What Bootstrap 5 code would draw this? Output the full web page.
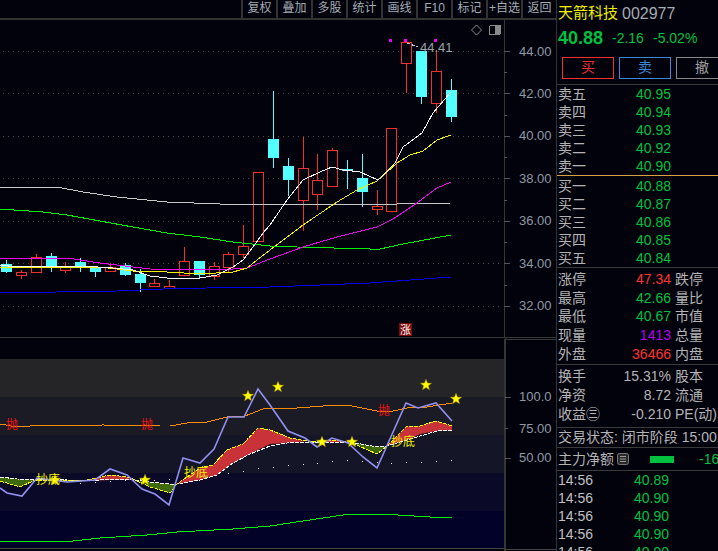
<!DOCTYPE html>
<html lang="zh">
<head>
<meta charset="utf-8">
<title>天箭科技 002977</title>
<link href="https://cdn.jsdelivr.net/npm/bootstrap@5.3.0/dist/css/bootstrap.min.css" rel="stylesheet">
<style>
html,body{height:100%;margin:0;overflow:hidden;background:#02020c;}
body{font-family:"Liberation Sans","Noto Sans CJK SC",sans-serif;font-size:14px;color:#b4b4b4;}
.app{width:718px;height:551px;overflow:hidden;}
.chartcol{width:556px;flex:none;}
.toolbar{height:20px;border-bottom:2px solid #333;}
.toolbtn{width:35px;height:18px;border-left:2px solid #333;color:#a3abb3;font-size:12px;line-height:17px;text-align:center;white-space:nowrap;}
.chartsvg{display:block;width:556px;height:531px;}
.chartsvg text{font-family:"Liberation Sans","Noto Sans CJK SC",sans-serif;}
.axis{fill:#8f99a3;font-size:13px;}
.side{width:162px;flex:none;border-left:1px solid #333;overflow:hidden;}
.head{height:84px;padding-left:1px;}
.titlerow{height:27px;}
.stockname{color:#f0f000;font-size:15px;}
.stockcode{color:#a3abb3;font-size:16px;margin-left:4px;}
.pricerow{height:22px;}
.bigprice{color:#00c040;font-size:18px;font-weight:700;width:54px;}
.chg{color:#00c040;font-size:14px;width:41px;}
.tradebtns{margin-top:8px;padding-left:4px;gap:5px;width:190px;}
.tradebtn{width:52px;height:22px;flex:none;border:1.5px solid;font-size:14px;line-height:19px;text-align:center;}
.tb-buy{border-color:#f03030;color:#f03030;}
.tb-sell{border-color:#3a8ad8;color:#3a8ad8;}
.tb-undo{border-color:#888;color:#a0a0a0;}
.sect{border-top:1px solid #3a3a3a;padding-left:1px;white-space:nowrap;}
.goldline{border-top:1px solid #d8a040;}
.rowq{height:18px;line-height:18px;}
.rowq .lb{width:78px;flex:none;}
.up{color:#00c040;}
.sect-sell{height:91px;}
.sect-buy{height:92px;padding-top:1px;}
.sect-stat{height:97px;padding-top:2px;}
.rowst{height:18.7px;line-height:18.7px;}
.sect-turn{height:63px;padding-top:2px;}
.rowtn{height:19px;line-height:19px;}
.rowst .lb1,.rowtn .lb1{width:28px;flex:none;}
.valbox{width:85px;flex:none;text-align:right;margin-right:4px;}
.rowtn .lb1x{width:28px;flex:none;}
.red{color:#ff3232;}
.purple{color:#b400f0;}
.stateline{height:20px;line-height:19px;overflow:hidden;}
.flowline{height:23px;line-height:22px;overflow:hidden;}
.flowicon{display:block;width:12px;height:12px;flex:none;margin:0 21px 0 3px;}
.flowbar{width:24px;height:7px;background:#00c040;flex:none;margin-right:25px;}
.ticktime{width:76px;flex:none;color:#c0c0c0;}
</style>
</head>
<body>
<div class="app d-flex">
  <div class="chartcol">
    <div class="toolbar d-flex justify-content-end">
      <div class="toolbtn">复权</div><div class="toolbtn">叠加</div><div class="toolbtn">多股</div><div class="toolbtn">统计</div><div class="toolbtn">画线</div><div class="toolbtn">F10</div><div class="toolbtn">标记</div><div class="toolbtn">+自选</div><div class="toolbtn">返回</div>
    </div>
    <svg class="chartsvg" viewBox="0 20 556 531" xmlns="http://www.w3.org/2000/svg" shape-rendering="crispEdges">
      <defs>
        <polygon id="star" points="0,-5.8 1.5,-2 5.6,-1.8 2.4,0.8 3.5,4.7 0,2.5 -3.5,4.7 -2.4,0.8 -5.6,-1.8 -1.5,-2" fill="#ffff00" stroke="#a08000" stroke-width=".5" shape-rendering="auto"/>
      </defs>
      <!-- grid -->
      <g stroke="#4a4a4a" stroke-dasharray="1 4">
        <path d="M3 51.5H503M3 93.5H503M3 136.5H503M3 178.5H503M3 221.5H503M3 263.5H503M3 306.5H503"/>
      </g>
      <!-- axis -->
      <path d="M504.5 20V338M0 337.5H556M505.5 338V551M504 339.5H556" stroke="#363636" fill="none"/>
      <path d="M504 338.5V551" stroke="#363636"/>
      <path d="M504 51.5h6M504 93.5h6M504 136.5h6M504 178.5h6M504 221.5h6M504 263.5h6M504 306.5h6M504 72.5h3M504 115.5h3M504 157.5h3M504 200.5h3M504 242.5h3M504 285.5h3M505 397.5h6M505 428.5h3M505 458.5h6" stroke="#555"/>
      <g class="axis">
        <text x="519" y="56">44.00</text><text x="519" y="98">42.00</text><text x="519" y="140">40.00</text><text x="519" y="183">38.00</text><text x="519" y="225">36.00</text><text x="519" y="268">34.00</text><text x="519" y="310">32.00</text>
        <text x="519" y="401">100.0</text><text x="519" y="433">75.00</text><text x="519" y="462">50.00</text>
      </g>
      <!-- wicks -->
      <path stroke="#54ffff" fill="none" d="M6.5 260V273M51.5 253V272M80.5 258V272M95.5 268V277M125.5 263V276M140.5 269V292M199.5 261V279M273.5 91V168M288.5 158V196M347.5 160V189M362.5 154V207M421.5 51V104M451.5 79V122"/>
      <path stroke="#f03030" fill="none" d="M21.5 270V279M36.5 254V273M65.5 262V273M110.5 263V272M154.5 279V286M169.5 280V289M184.5 247V275M214.5 262V280M228.5 252V272M243.5 225V258M303.5 137V231M317.5 154V210M332.5 148V186M377.5 190V215M406.5 42V93M436.5 50V113"/>
      <!-- red hollow bodies -->
      <path stroke="#f03030" fill="#02020c" d="M16.5 272.5h10v3h-10zM31.5 257.5h10v15h-10zM60.5 266.5h10v4h-10zM105.5 267.5h10v4h-10zM149.5 283.5h10v3h-10zM164.5 286.5h10v2h-10zM179.5 261.5h10v14h-10zM209.5 266.5h10v10h-10zM223.5 254.5h10v13h-10zM238.5 246.5h10v8h-10zM253.5 172.5h10v69h-10zM298.5 168.5h10v32h-10zM312.5 180.5h10v14h-10zM327.5 150.5h10v36h-10zM372.5 206.5h10v3h-10zM386.5 128.5h10v83h-10zM401.5 42.5h10v21h-10zM431.5 71.5h10v32h-10z"/>
      <!-- cyan bodies -->
      <path fill="#54ffff" d="M1 264h11v8H1zM46 256h11v11H46zM75 262h11v6H75zM90 268h11v4H90zM120 265h11v10h-11zM135 274h11v9h-11zM194 261h11v14h-11zM268 139h11v19h-11zM283 166h11v14h-11zM342 169h11v2h-11zM357 178h11v14h-11zM416 51h11v46h-11zM446 90h11v27h-11z"/>
      <!-- moving averages -->
      <g fill="none">
        <polyline stroke="#c8c8c8" points="0,187 57,187 83,192 117,197 167,202 220,204 270,204 355,204 370,205 397,204 451,203"/>
        <polyline stroke="#00ee00" points="0,209 43,212 67,215 100,221 133,227 167,233 200,237 233,242 270,246 297,247 370,249 380,249 403,244 451,235"/>
        <polyline stroke="#0000e8" points="0,293 57,292 117,291 163,289 207,288 270,287 370,283 451,277"/>
        <polyline stroke="#ee00ee" points="0,258 67,258 100,263 133,267 150,269 200,270 233,269 247,268 270,259 303,247 337,237 377,227 393,219 417,203 437,188 451,182"/>
        <polyline stroke="#f0f000" points="0,267 33,267 67,267 100,267 133,271 167,272 200,274 233,272 247,268 257,260 270,250 303,225 337,202 357,190 377,181 397,163 410,155 423,151 437,140 451,135"/>
        <polyline stroke="#f4f4f4" points="0,265 17,267 33,266 50,267 83,266 113,268 133,270 150,276 167,278 177,279 200,278 217,275 233,267 243,260 253,247 263,233 270,225 287,200 303,180 320,172 332,167 343,170 360,172 378,180 395,163 403,147 422,133 433,113 451,92"/>
      </g>
      <!-- peak marks -->
      <path fill="#f000f0" d="M389 39h3v3h-3zM404 39h3v3h-3zM434 39h3v3h-3z"/>
      <path d="M407 43l11 4" stroke="#c8c8c8" stroke-dasharray="3 2" fill="none"/>
      <text x="420" y="52" fill="#9aa2aa" font-size="13">44.41</text>
      <path d="M476.5 25l5 5-5 5-5-5z" fill="none" stroke="#8a8a8a" shape-rendering="auto"/>
      <rect x="489.5" y="25.5" width="11" height="9" rx="1.5" fill="none" stroke="#8a8a8a"/>
      <rect x="495" y="26" width="5" height="8" fill="#8a8a8a"/>
      <!-- limit-up badge -->
      <rect x="399" y="323" width="13" height="13" fill="#7c0a0a"/>
      <text x="400" y="334" fill="#fff" font-size="11">涨</text>
      <!-- indicator bands -->
      <rect x="0" y="359" width="504" height="38" fill="#252528"/>
      <rect x="0" y="397" width="504" height="38" fill="#1b1b25"/>
      <rect x="0" y="435" width="504" height="38" fill="#141526"/>
      <rect x="0" y="473" width="504" height="38" fill="#0a0a28"/>
      <rect x="0" y="511" width="504" height="37" fill="#020228"/>
      <path d="M0 548.5H504M504 549.5H556" stroke="#444"/>
      <!-- ribbons -->
      <g shape-rendering="auto">
        <path fill="#3f6a08" d="M0 477L17 479 37 480 20 487 0 481zM37 480L67 480 88 481 67 482zM133 480L150 482 167 484 177 484 170 493 150 487zM306 442L322 442 322 444zM350 442L377 447 387 446 377 454z"/>
        <path fill="#c83238" d="M88 481L110 475 127 477 133 480 110 480zM177 484L200 468 213 465 227 450 243 444 258 428 270 430 290 438 307 441 288 443 270 444 250 454 233 463 217 475 200 480zM323 442L332 440 350 442zM387 446L406 427 420 426 436 421 452 426 452 430 436 431 420 434 410 439z"/>
      </g>
      <g fill="none">
        <polyline stroke="#fff" stroke-dasharray="4 1" points="0,477 17,479 67,480 100,480 117,479 133,480 150,482 170,484 177,484 200,480 217,475 233,463 250,454 270,446 287,443 303,442 327,442 350,442 377,447 387,446 410,439 427,434 437,431 452,430"/>
        <polyline stroke="#ff0" stroke-dasharray="4 1" points="0,481 20,487 35,480 67,481 87,480 110,475 127,477 133,479 150,487 170,493 177,484 200,468 213,465 227,450 243,444 258,428 270,430 290,438 307,441 312,442 330,440 350,442 377,454 387,446 406,427 420,426 436,421 452,426"/>
        <polyline stroke="#ff8c00" points="0,424 17,427 30,426 103,425 160,426 170,426 187,423 207,422 227,417 245,416 263,409 270,408 297,408 323,406 347,405 377,411 393,411 407,408 427,407 452,403"/>
        <polyline stroke="#00ee00" points="0,541 73,541 100,538 147,535 177,532 233,529 270,526 303,521 343,515 370,514 398,515 430,517 452,517"/>
        <polyline stroke="#9090f0" stroke-width="1.6" shape-rendering="auto" points="0,488 7,493 22,496 37,478 67,482 95,480 110,469 127,475 142,489 155,494 169,505 183,458 200,463 214,449 228,417 244,417 258,389 270,405 288,431 305,438 317,447 332,438 348,443 363,457 377,468 406,403 418,408 436,403 452,421"/>
      </g>
      <path fill="#fff" d="M80 483h1v1h-1zM95 482h1v1h-1zM110 481h1v1h-1zM125 480h1v1h-1zM140 479h1v1h-1zM154 480h1v1h-1zM169 479h1v1h-1zM228 473h1v1h-1zM243 471h1v1h-1zM258 468h1v1h-1zM273 467h1v1h-1zM288 465h1v1h-1zM303 464h1v1h-1zM317 463h1v1h-1zM332 461h1v1h-1zM347 460h1v1h-1zM362 461h1v1h-1zM377 462h1v1h-1zM391 463h1v1h-1zM406 462h1v1h-1zM421 462h1v1h-1zM436 461h1v1h-1zM451 460h1v1h-1z"/>
      <g>
        <use href="#star" x="55" y="480"/><use href="#star" x="145" y="480"/><use href="#star" x="248" y="396"/><use href="#star" x="278" y="387"/><use href="#star" x="322" y="442"/><use href="#star" x="352" y="442"/><use href="#star" x="426" y="385"/><use href="#star" x="456" y="399"/>
      </g>
      <!-- signal text -->
      <g font-size="12" shape-rendering="auto">
        <text x="36" y="484" fill="#f0f000">抄底</text>
        <text x="184" y="477" fill="#f0f000">抄底</text>
        <text x="391" y="446" fill="#f0f000">抄底</text>
        <text x="6" y="429" fill="#f01010">抛</text>
        <text x="141" y="429" fill="#f01010">抛</text>
        <text x="378" y="415" fill="#f01010">抛</text>
      </g>
    </svg>
  </div>
  <div class="side">
    <div class="head">
      <div class="titlerow d-flex align-items-center"><span class="stockname">天箭科技</span><span class="stockcode">002977</span></div>
      <div class="pricerow d-flex align-items-center"><span class="bigprice">40.88</span><span class="chg">-2.16</span><span class="chg">-5.02%</span></div>
      <div class="tradebtns d-flex"><div class="tradebtn tb-buy">买</div><div class="tradebtn tb-sell">卖</div><div class="tradebtn tb-undo">撤</div></div>
    </div>
    <div class="sect sect-sell">
      <div class="rowq d-flex"><span class="lb">卖五</span><span class="up">40.95</span></div>
      <div class="rowq d-flex"><span class="lb">卖四</span><span class="up">40.94</span></div>
      <div class="rowq d-flex"><span class="lb">卖三</span><span class="up">40.93</span></div>
      <div class="rowq d-flex"><span class="lb">卖二</span><span class="up">40.92</span></div>
      <div class="rowq d-flex"><span class="lb">卖一</span><span class="up">40.90</span></div>
    </div>
    <div class="sect goldline sect-buy">
      <div class="rowq d-flex"><span class="lb">买一</span><span class="up">40.88</span></div>
      <div class="rowq d-flex"><span class="lb">买二</span><span class="up">40.87</span></div>
      <div class="rowq d-flex"><span class="lb">买三</span><span class="up">40.86</span></div>
      <div class="rowq d-flex"><span class="lb">买四</span><span class="up">40.85</span></div>
      <div class="rowq d-flex"><span class="lb">买五</span><span class="up">40.84</span></div>
    </div>
    <div class="sect sect-stat">
      <div class="rowst d-flex"><span class="lb1">涨停</span><span class="valbox red">47.34</span><span>跌停</span></div>
      <div class="rowst d-flex"><span class="lb1">最高</span><span class="valbox up">42.66</span><span>量比</span></div>
      <div class="rowst d-flex"><span class="lb1">最低</span><span class="valbox up">40.67</span><span>市值</span></div>
      <div class="rowst d-flex"><span class="lb1">现量</span><span class="valbox purple">1413</span><span>总量</span></div>
      <div class="rowst d-flex"><span class="lb1">外盘</span><span class="valbox red">36466</span><span>内盘</span></div>
    </div>
    <div class="sect sect-turn">
      <div class="rowtn d-flex"><span class="lb1x">换手</span><span class="valbox">15.31%</span><span>股本</span></div>
      <div class="rowtn d-flex"><span class="lb1x">净资</span><span class="valbox">8.72</span><span>流通</span></div>
      <div class="rowtn d-flex"><span class="lb1x text-nowrap">收益㊂</span><span class="valbox">-0.210</span><span>PE(动)</span></div>
    </div>
    <div class="sect stateline">交易状态: 闭市阶段 15:00:</div>
    <div class="sect flowline d-flex align-items-center">
      <span class="flex-shrink-0">主力净额</span>
      <svg class="flowicon" viewBox="0 0 12 12" xmlns="http://www.w3.org/2000/svg"><rect x=".5" y=".5" width="11" height="11" rx="2" fill="#2a2a2a" stroke="#777"/><path d="M3 3.5h6M3 6h6M3 8.5h6" stroke="#999"/></svg>
      <span class="flowbar"></span>
      <span class="up flex-shrink-0">-16</span>
    </div>
    <div class="sect">
      <div class="rowq d-flex"><span class="ticktime">14:56</span><span class="up">40.89</span></div>
      <div class="rowq d-flex"><span class="ticktime">14:56</span><span class="up">40.90</span></div>
      <div class="rowq d-flex"><span class="ticktime">14:56</span><span class="up">40.90</span></div>
      <div class="rowq d-flex"><span class="ticktime">14:56</span><span class="up">40.90</span></div>
      <div class="rowq d-flex"><span class="ticktime">14:56</span><span class="up">40.90</span></div>
    </div>
  </div>
</div>
<script src="https://cdn.jsdelivr.net/npm/bootstrap@5.3.0/dist/js/bootstrap.bundle.min.js"></script>
</body>
</html>
